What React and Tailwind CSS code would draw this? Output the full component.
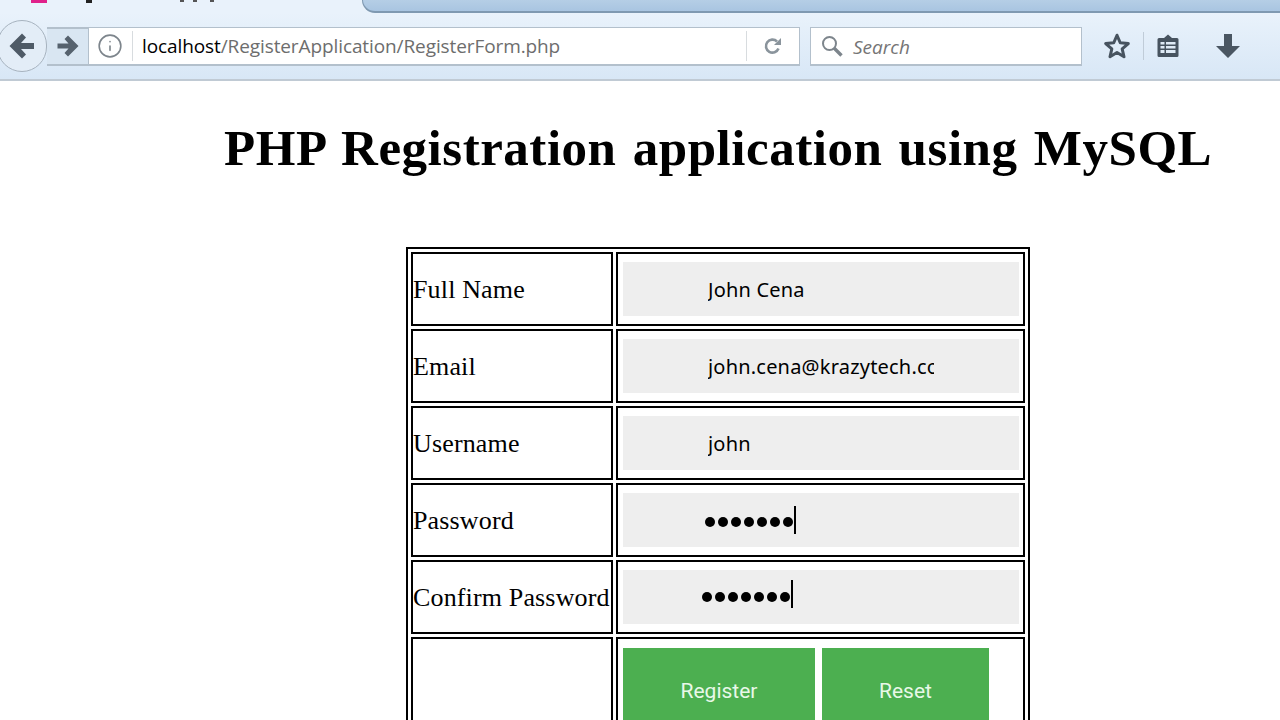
import { Info } from "lucide-react";

const rows = [
  { label: "Full Name", value: "John Cena" },
  { label: "Email", value: "john.cena@krazytech.com" },
  { label: "Username", value: "john" },
  { label: "Password", dots: 7, offset: "pl-[82px]", dotShift: "translate-y-[2px]", caret: "" },
  { label: "Confirm Password", dots: 7, offset: "pl-[79px]", dotShift: "", caret: "-translate-y-[3px]" },
];

function BackIcon() {
  return (
    <svg width="26" height="26" viewBox="0 0 26 26" fill="#4f5b67">
      <path d="M13 0.500l4 4-5 5.500h13v6H12l5 5.500-4 4L0.500 13z" />
    </svg>
  );
}

function ForwardIcon() {
  return (
    <svg width="22" height="22" viewBox="0 0 22 22" fill="#56626e">
      <path d="M11 0.500L7.500 4l4 4.500H0.500v5h11l-4 4.500 3.500 3.500L21.500 11z" />
    </svg>
  );
}

function ReloadIcon() {
  return (
    <svg width="20" height="20" viewBox="0 0 20 20" fill="none">
      <path d="M15.500 12.500a6.500 6.500 0 1 1-1.500-7" stroke="#8a949c" strokeWidth="2.600" />
      <path d="M18 2v7h-7z" fill="#8a949c" />
    </svg>
  );
}

function SearchIcon() {
  return (
    <svg width="22" height="22" viewBox="0 0 22 22" fill="none" stroke="#7d858c">
      <circle cx="8.500" cy="8.500" r="6.500" strokeWidth="2" />
      <path d="M13 13l7.500 7.500" strokeWidth="3.400" />
    </svg>
  );
}

function StarIcon() {
  return (
    <svg width="28" height="28" viewBox="0 0 26 26" fill="none">
      <path d="M13 3l3 7 7.500.700-5.700 5 1.700 7.300-6.500-3.900L6.500 23l1.700-7.300-5.700-5L10 10z" stroke="#47535f" strokeWidth="2.800" strokeLinejoin="round" />
    </svg>
  );
}

function ClipboardIcon() {
  return (
    <svg width="24" height="26" viewBox="0 0 24 26" fill="#47535f">
      <path d="M3 5h5l4-3.500L16 5h5a1.500 1.500 0 0 1 1.500 1.500v16A1.500 1.500 0 0 1 21 24H3a1.500 1.500 0 0 1-1.500-1.500v-16A1.500 1.500 0 0 1 3 5z" />
      <path d="M4.500 9h15v2.500h-15zM4.500 13h15v2.500h-15zM4.500 17h15v3h-15z" fill="#dfeaf5" />
      <path d="M8.500 9h1.500v11H8.500z" fill="#47535f" />
    </svg>
  );
}

function DownloadIcon() {
  return (
    <svg width="26" height="28" viewBox="0 0 26 28" fill="#4a5662">
      <path d="M9 2h8v12h8L13 26 1 14h8z" />
    </svg>
  );
}

function Toolbar() {
  return (
    <div className="h-[68px] flex items-center bg-gradient-to-b from-[#e9f2fb] to-[#d8e7f6] border-b-2 border-[#c0cad4]">
      <div className="w-[50px] h-[52px] shrink-0 -ml-[3px] rounded-full border border-[#a7b3bf] bg-[#e3edf7] flex items-center justify-center z-10">
        <BackIcon />
      </div>
      <div className="w-[41px] h-[39px] shrink-0 flex items-center justify-center bg-[#d9e6f2] border-y-2 border-[#b3c0cc]">
        <ForwardIcon />
      </div>
      <div className="w-[712px] h-[39px] shrink-0 bg-white border border-[#b3c0cc] border-b-2 flex items-center font-['Open_Sans',sans-serif] text-[19px]">
        <div className="w-[43px] flex justify-center text-[#7d858c] shrink-0">
          <Info size={26} strokeWidth={1.500} className="-ml-px" />
        </div>
        <div className="w-px h-[30px] bg-[#d8dcdf]"></div>
        <div className="pl-[9px] pt-[2px] flex-1 tracking-[-0.1px]">
          <span className="text-black">localhost</span>
          <span className="text-[#6d6d6d]">/RegisterApplication/RegisterForm.php</span>
        </div>
        <div className="w-px h-[30px] bg-[#d8dcdf]"></div>
        <div className="w-[52px] flex justify-center shrink-0">
          <ReloadIcon />
        </div>
      </div>
      <div className="w-[272px] h-[39px] ml-[10px] shrink-0 bg-white border border-[#b3c0cc] border-b-2 flex items-center pl-[10px] gap-[10px]">
        <SearchIcon />
        <span className="pt-[3px] font-['Open_Sans',sans-serif] italic text-[19px] text-[#757575]">Search</span>
      </div>
      <div className="ml-[21px] flex items-center">
        <StarIcon />
        <div className="w-px h-[28px] bg-[#c0ccd8] ml-[12px] mr-[12px]"></div>
        <ClipboardIcon />
        <div className="ml-[35px]">
          <DownloadIcon />
        </div>
      </div>
    </div>
  );
}

function TabStrip() {
  return (
    <div className="h-[13px] flex bg-[#e9f2fb] overflow-hidden">
      <div className="w-[362px] shrink-0 flex items-start pl-[31px]">
        <div className="w-[16px] h-[3px] bg-[#e0218a]"></div>
        <div className="w-[6px] h-[3px] bg-[#222222] ml-[39px]"></div>
        <div className="w-[4px] h-[2px] bg-[#555555] ml-[88px]"></div>
        <div className="w-[4px] h-[2px] bg-[#555555] ml-[9px]"></div>
        <div className="w-[4px] h-[2px] bg-[#555555] ml-[13px]"></div>
      </div>
      <div className="flex-1 bg-gradient-to-b from-[#b5cee6] to-[#a9c5e1] rounded-bl-[14px] border-l border-b-2 border-[#7f99b1]"></div>
    </div>
  );
}

function Row({ row }) {
  return (
    <tr className="h-[74px]">
      <td className="border-2 border-black pt-[2px] text-[26px] leading-none tracking-[0.15px] whitespace-nowrap font-['Liberation_Serif',serif] text-black">
        {row.label}
      </td>
      <td className="border-2 border-black px-[5px]">
        {row.dots ? (
          <div className={`w-[396px] h-[54px] bg-[#eeeeee] flex items-center ${row.offset}`}>
            <span className={`flex gap-[3px] ${row.dotShift}`}>
              {Array.from({ length: row.dots }).map((_, i) => (
                <span key={i} className="w-[10px] h-[10px] rounded-full bg-black"></span>
              ))}
            </span>
            <span className={`w-[2px] h-[28px] ml-[1px] bg-black ${row.caret}`}></span>
          </div>
        ) : (
          <input
            readOnly
            value={row.value}
            className="block w-[396px] h-[54px] bg-[#eeeeee] px-[85px] text-[20px] tracking-[0.2px] text-black font-['Noto_Sans',sans-serif] outline-none"
          />
        )}
      </td>
    </tr>
  );
}

export default function App() {
  return (
    <div className="h-[720px] overflow-hidden bg-white">
      <TabStrip />
      <Toolbar />
      <h1 className="pl-[224px] pt-[37px] text-[51px] leading-[60px] tracking-[0.53px] [word-spacing:3px] font-bold text-black whitespace-nowrap font-['Liberation_Serif',serif]">
        PHP Registration application using MySQL
      </h1>
      <table className="ml-[406px] mt-[69px] border-2 border-black border-separate border-spacing-[3px] w-[624px] table-fixed">
        <colgroup>
          <col className="w-[202px]" />
          <col />
        </colgroup>
        <tbody>
          {rows.map((row) => (
            <Row key={row.label} row={row} />
          ))}
          <tr>
            <td className="border-2 border-black"></td>
            <td className="border-2 border-black px-[5px] pt-[9px] pb-[9px]">
              <div className="flex gap-[7px] font-['Roboto',sans-serif] text-[21px]">
                <button className="w-[192px] h-[86px] pt-[2px] bg-[#4caf50] text-[#e8f8e8]">Register</button>
                <button className="w-[167px] h-[86px] pt-[2px] bg-[#4caf50] text-[#e8f8e8]">Reset</button>
              </div>
            </td>
          </tr>
        </tbody>
      </table>
    </div>
  );
}
